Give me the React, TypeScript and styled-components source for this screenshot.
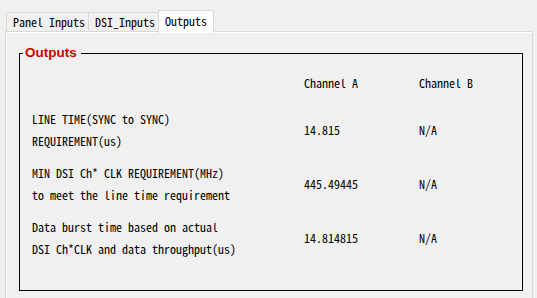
import React from "react";
import styled, { createGlobalStyle } from "styled-components";

const Global = createGlobalStyle`
  html, body { margin: 0; padding: 0; background: #f0f0f0; }
  body { overflow: hidden; }
`;

const mono = `"Noto Sans Mono CJK SC", "Liberation Mono", monospace`;

const Page = styled.div`
  width: 537px;
  height: 298px;
  box-sizing: border-box;
  padding: 10px 0 0 5px;
  background: #f0f0f0;
  font-family: ${mono};
  font-size: 12px;
  color: #000;
  overflow: hidden;
`;

const TabBar = styled.div`
  display: flex;
  align-items: flex-end;
  height: 23px;
  padding-left: 1px;
  position: relative;
  z-index: 2;
`;

const Tab = styled.div<{ $active?: boolean; $w: number }>`
  box-sizing: border-box;
  width: ${(p) => p.$w}px;
  height: ${(p) => (p.$active ? 23 : 19)}px;
  margin-bottom: ${(p) => (p.$active ? 0 : 2)}px;
  margin-left: -1px;
  padding-left: 6px;
  border: 1px solid #d9d9d9;
  border-bottom: none;
  background: ${(p) => (p.$active ? "#ffffff" : "#f0f0f0")};
  line-height: ${(p) => (p.$active ? 20 : 18)}px;
  white-space: nowrap;
  &:first-child { margin-left: 0; }
`;

const Panel = styled.div`
  box-sizing: border-box;
  width: 528px;
  height: 280px;
  margin-top: -2px;
  border: 1px solid #d9d9d9;
  border-bottom: none;
  box-shadow: inset 1px 1px 0 #ffffff;
  padding: 13px 0 0 13px;
`;

const Group = styled.fieldset`
  box-sizing: border-box;
  width: 504px;
  height: 246px;
  margin: 0;
  padding: 11px 0 0 12px;
  border: 1px solid #000;
  min-width: 0;
`;

const Legend = styled.legend`
  margin-left: -9px;
  padding: 0 4px 0 2px;
  font-family: "Liberation Sans", Arial, sans-serif;
  font-weight: bold;
  font-size: 13.5px;
  line-height: 16px;
  color: #d40000;
`;

const Table = styled.div`
  display: grid;
  grid-template-columns: 272px 115px 1fr;
  row-gap: 10px;
  line-height: 22px;
  white-space: nowrap;
`;

const Cell = styled.div<{ $head?: boolean }>`
  align-self: center;
  margin-bottom: ${(p) => (p.$head ? 4 : 0)}px;
`;

const rows = [
  {
    label: ["LINE TIME(SYNC to SYNC)", "REQUIREMENT(us)"],
    a: "14.815",
    b: "N/A",
  },
  {
    label: ["MIN DSI Ch* CLK REQUIREMENT(MHz)", "to meet the line time requirement"],
    a: "445.49445",
    b: "N/A",
  },
  {
    label: ["Data burst time based on actual", "DSI Ch*CLK and data throughput(us)"],
    a: "14.814815",
    b: "N/A",
  },
];

export default function App() {
  return (
    <Page>
      <Global />
      <TabBar>
        <Tab $w={83}>Panel Inputs</Tab>
        <Tab $w={71}>DSI_Inputs</Tab>
        <Tab $w={56} $active>
          Outputs
        </Tab>
      </TabBar>
      <Panel>
        <Group>
          <Legend>Outputs</Legend>
          <Table>
            <Cell $head />
            <Cell $head>Channel A</Cell>
            <Cell $head>Channel B</Cell>
            {rows.map((r) => (
              <React.Fragment key={r.a}>
                <Cell>
                  {r.label[0]}
                  <br />
                  {r.label[1]}
                </Cell>
                <Cell>{r.a}</Cell>
                <Cell>{r.b}</Cell>
              </React.Fragment>
            ))}
          </Table>
        </Group>
      </Panel>
    </Page>
  );
}
